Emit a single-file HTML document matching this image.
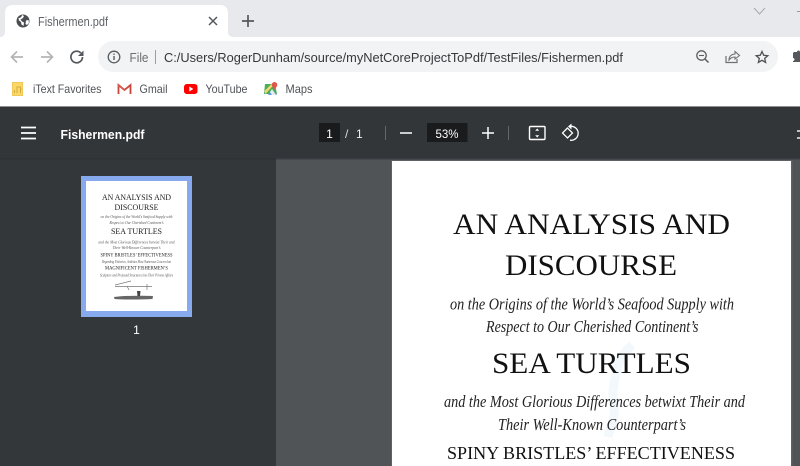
<!DOCTYPE html>
<html>
<head>
<meta charset="utf-8">
<title>Fishermen.pdf</title>
<style>
html,body{margin:0;padding:0;width:800px;height:466px;overflow:hidden;background:#505457}
svg{display:block;position:absolute;left:0;top:0;filter:blur(.3px)}
.u{font-family:"Liberation Sans",sans-serif}
.s{font-family:"Liberation Serif",serif;fill:#111}
.si{font-family:"Liberation Serif",serif;font-style:italic;fill:#222}
.ts{font-family:"Liberation Serif",serif;fill:#222}
.tsi{font-family:"Liberation Serif",serif;font-style:italic;fill:#555}
</style>
</head>
<body>
<svg width="800" height="466" viewBox="0 0 800 466" xmlns="http://www.w3.org/2000/svg">
<!-- tab strip -->
<rect x="0" y="0" width="800" height="37" fill="#e8e9ed"/>
<path d="M0 37C3 37 5 35 5 32V13C5 8 8 5 13 5H220C225 5 228 8 228 13V32C228 35 230 37 233 37Z" fill="#fff"/>
<circle cx="23" cy="21" r="6.500" fill="#4a4d51"/>
<path d="M18.500 18c2 0 3-1 3.500-3l2 1-1 2-2.500 1.500 1.500 2 2 1-.5 3.500-2-1.500-.5-2.500-2-1.500zM26 20.500l2.500-.5.500 3-2 2-1.500-1z" fill="#fff"/>
<text x="38" y="26" class="u" font-size="12.500" fill="#5f6368" textLength="70" lengthAdjust="spacingAndGlyphs">Fishermen.pdf</text>
<path d="M209 17l8 8M217 17l-8 8" stroke="#55585c" stroke-width="1.500" fill="none"/>
<path d="M248 15v12M242 21h12" stroke="#55585c" stroke-width="1.700" fill="none"/>
<path d="M754 8l5.500 6 5.500-6" stroke="#a5a7ab" stroke-width="1" fill="none"/>
<rect x="797" y="11" width="3" height="1" fill="#999"/>
<!-- toolbar -->
<rect x="0" y="37" width="800" height="70" fill="#fff"/>
<rect x="98" y="41" width="680" height="31" rx="15.500" fill="#f1f3f4"/>
<path d="M23 57H12M17 51.500L11.500 57l5.500 5.500" stroke="#b3b5b8" stroke-width="1.700" fill="none"/>
<path d="M41 57h11M47 51.500l5.500 5.500-5.500 5.500" stroke="#b3b5b8" stroke-width="1.700" fill="none"/>
<path d="M82.500 57a5.800 5.800 0 1 1-1.700-4.100" stroke="#55585c" stroke-width="1.700" fill="none"/>
<path d="M83.500 50.500v5.500h-5.500z" fill="#55585c"/>
<circle cx="114" cy="57" r="5.800" stroke="#5a5d61" stroke-width="1.300" fill="none"/>
<path d="M114 56v4M114 53.500v1.400" stroke="#5a5d61" stroke-width="1.400"/>
<text x="129.500" y="62" class="u" font-size="12.500" fill="#6b6e72" textLength="19" lengthAdjust="spacingAndGlyphs">File</text>
<rect x="155" y="50" width="1" height="14" fill="#9a9da1"/>
<text x="164" y="62" class="u" font-size="13" fill="#35383c" textLength="459" lengthAdjust="spacingAndGlyphs">C:/Users/RogerDunham/source/myNetCoreProjectToPdf/TestFiles/Fishermen.pdf</text>
<circle cx="701.500" cy="55.500" r="4.700" stroke="#5a5d61" stroke-width="1.300" fill="none"/>
<path d="M705 59l3.500 3.500" stroke="#5a5d61" stroke-width="1.500"/>
<path d="M699 55.500h5" stroke="#5a5d61" stroke-width="1.100"/>
<path d="M726 56v6.500h11V59" stroke="#6e7175" stroke-width="1.200" fill="none"/>
<path d="M729 60c0-4 3-6 6-6v-2.500l4.500 4-4.500 3.500V57c-2.500 0-4.500 1-6 3z" stroke="#6e7175" stroke-width="1.100" fill="none"/>
<path d="M762 51.500l1.700 3.800 4.100.4-3.100 2.700.9 4-3.600-2.100-3.600 2.100.9-4-3.100-2.700 4.100-.4z" stroke="#4f5256" stroke-width="1.300" fill="none"/>
<path d="M793 56v-2.500c0-.8.700-1.500 1.500-1.500h2.500c0-2 3-2 3 0h0v10h-7v-1c2 0 2-3 0-3v-2z" fill="#55585c"/>
<!-- bookmarks -->
<rect x="12" y="82" width="11" height="14" fill="#fad766"/>
<rect x="12.500" y="82.500" width="10" height="13" fill="none" stroke="#ecc658" stroke-width=".8"/>
<path d="M17 93v-6h3.500v6M14.500 93v-3M20.500 89h1" stroke="#d2a93f" stroke-width="1" fill="none"/>
<text x="33" y="93" class="u" font-size="12" fill="#4f5256" textLength="68.500" lengthAdjust="spacingAndGlyphs">iText Favorites</text>
<path d="M118.500 94V85l6 5 6-5v9" stroke="#c9463c" stroke-width="1.800" fill="none"/>
<path d="M118 85l6.500 5" stroke="#d65b50" stroke-width="1.500"/>
<text x="139.500" y="93" class="u" font-size="12" fill="#4f5256" textLength="28" lengthAdjust="spacingAndGlyphs">Gmail</text>
<rect x="184" y="84" width="13.500" height="10" rx="2.800" fill="#f00"/>
<path d="M189.300 86.500v5l4-2.500z" fill="#fff"/>
<text x="205.500" y="93" class="u" font-size="12" fill="#4f5256" textLength="42" lengthAdjust="spacingAndGlyphs">YouTube</text>
<path d="M265 84h10l2 10h-13z" fill="#4bae5b"/>
<path d="M264.500 91l7-7h3l-9 10z" fill="#f5d76e"/>
<path d="M268 95l4-5 5 5z" fill="#5b9cf0"/>
<path d="M272 89l4 6h-4l-2-3z" fill="#e8ecf2"/>
<path d="M274.500 82a2.800 2.800 0 0 1 2.800 2.800c0 1.800-2.800 4.700-2.800 4.700s-2.800-2.900-2.800-4.700a2.800 2.800 0 0 1 2.800-2.800z" fill="#e0564a"/>
<text x="285.500" y="93" class="u" font-size="12" fill="#4f5256" textLength="27" lengthAdjust="spacingAndGlyphs">Maps</text>
<!-- sidebar + viewer -->
<rect x="0" y="158" width="276" height="308" fill="#33373a"/>
<rect x="276" y="158" width="524" height="308" fill="#505457"/>
<!-- pdf toolbar -->
<rect x="0" y="106" width="800" height="1.500" fill="#8e9092"/>
<rect x="0" y="107" width="800" height="51" fill="#323639"/>
<rect x="0" y="158" width="800" height="1.500" fill="#2c2f32" opacity=".6"/>
<path d="M21 127.500h15M21 133h15M21 138.500h15" stroke="#fff" stroke-width="1.700"/>
<text x="60.500" y="139" class="u" font-size="13" font-weight="bold" fill="#fff" textLength="84" lengthAdjust="spacingAndGlyphs">Fishermen.pdf</text>
<rect x="319" y="123" width="21" height="19" fill="#191b1c"/>
<text x="329.500" y="138" class="u" font-size="12" fill="#fff" text-anchor="middle">1</text>
<text x="345" y="138" class="u" font-size="12" fill="#ddd">/</text>
<text x="356" y="138" class="u" font-size="12" fill="#eee">1</text>
<rect x="385" y="126" width="1" height="14" fill="#63676a"/>
<path d="M400 133h12" stroke="#fff" stroke-width="1.500"/>
<rect x="427" y="123" width="40.500" height="19" fill="#191b1c"/>
<text x="447" y="138" class="u" font-size="12" fill="#fff" text-anchor="middle" textLength="23" lengthAdjust="spacingAndGlyphs">53%</text>
<path d="M482 133h12M488 127v12" stroke="#fff" stroke-width="1.500"/>
<rect x="508" y="126" width="1" height="14" fill="#63676a"/>
<rect x="529.500" y="126.500" width="15.500" height="13" rx="1" stroke="#fff" stroke-width="1.400" fill="none"/>
<path d="M537.200 128.500l-2 2.200h4zM537.200 137.500l-2-2.200h4z" fill="#fff"/>
<path d="M567.500 128l-5 5 5 5 5-5z" stroke="#fff" stroke-width="1.300" fill="none"/>
<path d="M571 126.300a7 7 0 1 1-1 13.900" stroke="#fff" stroke-width="1.300" fill="none"/>
<path d="M571.500 123.500l-3.500 3 3.500 3z" fill="#fff"/>
<path d="M797 131h3M797 138h3" stroke="#eee" stroke-width="1.500"/>
<!-- thumbnail -->
<rect x="81" y="176" width="111" height="141" fill="#86aaed"/>
<rect x="86" y="181" width="101" height="130" fill="#fff"/>
<text x="136.500" y="200" class="ts" font-size="8.200" text-anchor="middle" textLength="69" lengthAdjust="spacingAndGlyphs">AN ANALYSIS AND</text>
<text x="136.500" y="210" class="ts" font-size="8.200" text-anchor="middle" textLength="44" lengthAdjust="spacingAndGlyphs">DISCOURSE</text>
<text x="136.500" y="218" class="tsi" font-size="4.500" text-anchor="middle" textLength="72" lengthAdjust="spacingAndGlyphs">on the Origins of the World’s Seafood Supply with</text>
<text x="136.500" y="224" class="tsi" font-size="4.500" text-anchor="middle" textLength="54" lengthAdjust="spacingAndGlyphs">Respect to Our Cherished Continent’s</text>
<text x="136.500" y="234" class="ts" font-size="8.200" text-anchor="middle" textLength="51" lengthAdjust="spacingAndGlyphs">SEA TURTLES</text>
<text x="136.500" y="243.500" class="tsi" font-size="4.500" text-anchor="middle" textLength="76" lengthAdjust="spacingAndGlyphs">and the Most Glorious Differences betwixt Their and</text>
<text x="136.500" y="249" class="tsi" font-size="4.500" text-anchor="middle" textLength="48" lengthAdjust="spacingAndGlyphs">Their Well-Known Counterpart’s</text>
<text x="136.500" y="256.500" class="ts" font-size="5" text-anchor="middle" textLength="72" lengthAdjust="spacingAndGlyphs">SPINY BRISTLES’ EFFECTIVENESS</text>
<text x="136.500" y="263" class="tsi" font-size="4" text-anchor="middle" textLength="69" lengthAdjust="spacingAndGlyphs">Regarding Fisheries, Aridities Most Numerous Concern but</text>
<text x="136.500" y="269.500" class="ts" font-size="5" text-anchor="middle" textLength="63" lengthAdjust="spacingAndGlyphs">MAGNIFICENT FISHERMEN’S</text>
<text x="136.500" y="276.500" class="tsi" font-size="4" text-anchor="middle" textLength="73" lengthAdjust="spacingAndGlyphs">Sculpture and Profound Structures into Their Private Affairs</text>
<path d="M115 285l16-4M115 286.500h37M127 286l2 4M147 284v6" stroke="#777" stroke-width=".7" fill="none"/>
<path d="M114 297c10-1.500 28-1.500 39-1l-.5 3c-12 .7-28 .7-38 0z" fill="#666"/>
<path d="M137 291l.5 5h2.500l.5-5z" fill="#444"/>
<text x="136.500" y="334" class="u" font-size="12" fill="#fff" text-anchor="middle">1</text>
<!-- pdf page -->
<rect x="391" y="160" width="401.500" height="306" fill="#6b6f72" opacity=".5"/>
<rect x="392" y="161" width="399" height="305" fill="#fff"/>
<path d="M632 345c-6 6-10 9-14 20-3 14-7 26-4 40 2 14-4 22-6 32" stroke="#f2f8fb" stroke-width="9" fill="none"/>
<text x="453" y="234" class="s" font-size="30" textLength="277" lengthAdjust="spacingAndGlyphs">AN ANALYSIS AND</text>
<text x="505" y="275" class="s" font-size="30" textLength="172" lengthAdjust="spacingAndGlyphs">DISCOURSE</text>
<text x="450" y="309.500" class="si" font-size="16.500" textLength="284" lengthAdjust="spacingAndGlyphs">on the Origins of the World’s Seafood Supply with</text>
<text x="486" y="332" class="si" font-size="16.500" textLength="212.500" lengthAdjust="spacingAndGlyphs">Respect to Our Cherished Continent’s</text>
<text x="492" y="373" class="s" font-size="30" textLength="199" lengthAdjust="spacingAndGlyphs">SEA TURTLES</text>
<text x="444" y="407" class="si" font-size="16.500" textLength="301" lengthAdjust="spacingAndGlyphs">and the Most Glorious Differences betwixt Their and</text>
<text x="498" y="430" class="si" font-size="16.500" textLength="188" lengthAdjust="spacingAndGlyphs">Their Well-Known Counterpart’s</text>
<text x="447" y="459" class="s" font-size="18" textLength="288" lengthAdjust="spacingAndGlyphs">SPINY BRISTLES’ EFFECTIVENESS</text>
</svg>
</body>
</html>
